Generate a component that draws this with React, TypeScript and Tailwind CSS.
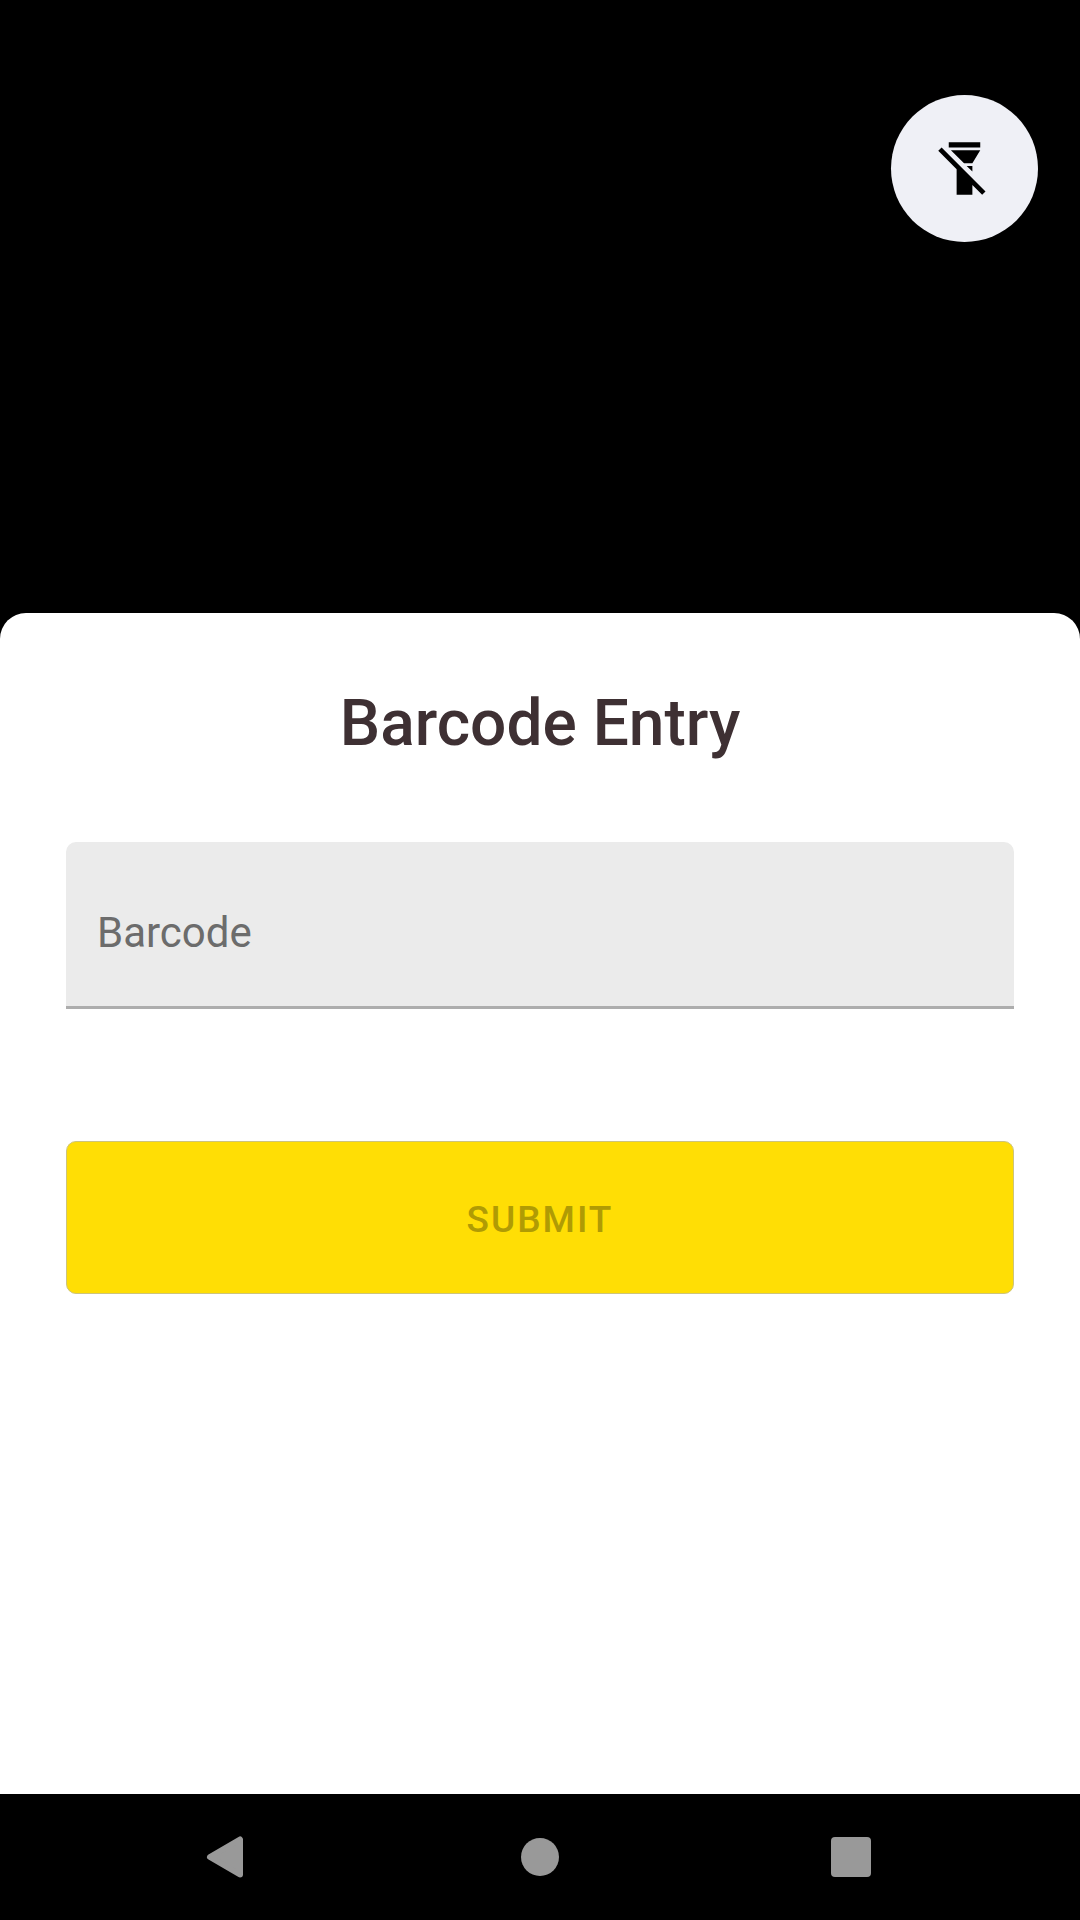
import { useState } from 'react'

function FlashlightOffIcon() {
  return (
    <svg viewBox="0 0 24 24" className="size-[63px]" fill="currentColor" aria-hidden="true">
      <path d="M2 5.27 3.28 4 20 20.72 18.73 22 15 18.27V22H9v-9.73zM18 5l-3 5h-3.18l-5-5zM18 4H6V2h12zM15 11v2.18L12.82 11z" />
    </svg>
  )
}

const navItems = [
  {
    label: 'Back',
    shape: <path d="M13 32 43 14.500V49.500Z" stroke="currentColor" strokeWidth="6" strokeLinejoin="round" />,
  },
  { label: 'Home', shape: <circle cx="32" cy="32" r="19" /> },
  { label: 'Recents', shape: <rect x="12" y="12" width="40" height="40" rx="4" /> },
]

function CameraPreview() {
  return (
    <section className="flex min-h-[613px] items-start justify-end px-[42px] pt-[95px]" aria-label="Camera">
      <button
        type="button"
        aria-label="Turn flashlight on"
        className="flex size-[147px] items-center justify-center rounded-full bg-[#eff0f6] text-black"
      >
        <FlashlightOffIcon />
      </button>
    </section>
  )
}

function BarcodeSheet() {
  const [barcode, setBarcode] = useState('')

  return (
    <main className="flex-1 rounded-t-[26px] bg-white px-[66px] pt-[74px]">
      <h1 className="text-center text-[64px] leading-[74px] font-medium text-[#3e3033]">Barcode Entry</h1>
      <form className="mt-[81px]" onSubmit={(event) => event.preventDefault()}>
        <input
          type="text"
          aria-label="Barcode"
          value={barcode}
          onChange={(event) => setBarcode(event.target.value)}
          placeholder="Barcode"
          className="block h-[167px] w-full rounded-t-[10px] border-b-3 border-[#adadad] bg-[#ebebeb] px-[31px] pt-4 text-[42px] text-[#3e3033] outline-none placeholder:text-[#6c6c6c]"
        />
        <button
          type="submit"
          disabled={!barcode}
          className="mt-[132px] h-[153px] w-full rounded-[10px] border border-[#cdc47c] bg-[#ffde05] pt-1 text-[37px] font-medium tracking-[2px] text-black uppercase disabled:text-[#b09b04]"
        >
          Submit
        </button>
      </form>
    </main>
  )
}

function NavigationBar() {
  return (
    <nav className="flex h-[126px] items-center justify-between bg-black px-[18%] text-[#999999]" aria-label="System">
      {navItems.map((item) => (
        <button key={item.label} type="button" aria-label={item.label} className="flex w-[70px] justify-center">
          <svg viewBox="0 0 64 64" className="size-16" fill="currentColor" aria-hidden="true">
            {item.shape}
          </svg>
        </button>
      ))}
    </nav>
  )
}

export default function App() {
  return (
    <div className="flex min-h-screen flex-col bg-black font-[Roboto,sans-serif]">
      <CameraPreview />
      <BarcodeSheet />
      <NavigationBar />
    </div>
  )
}
